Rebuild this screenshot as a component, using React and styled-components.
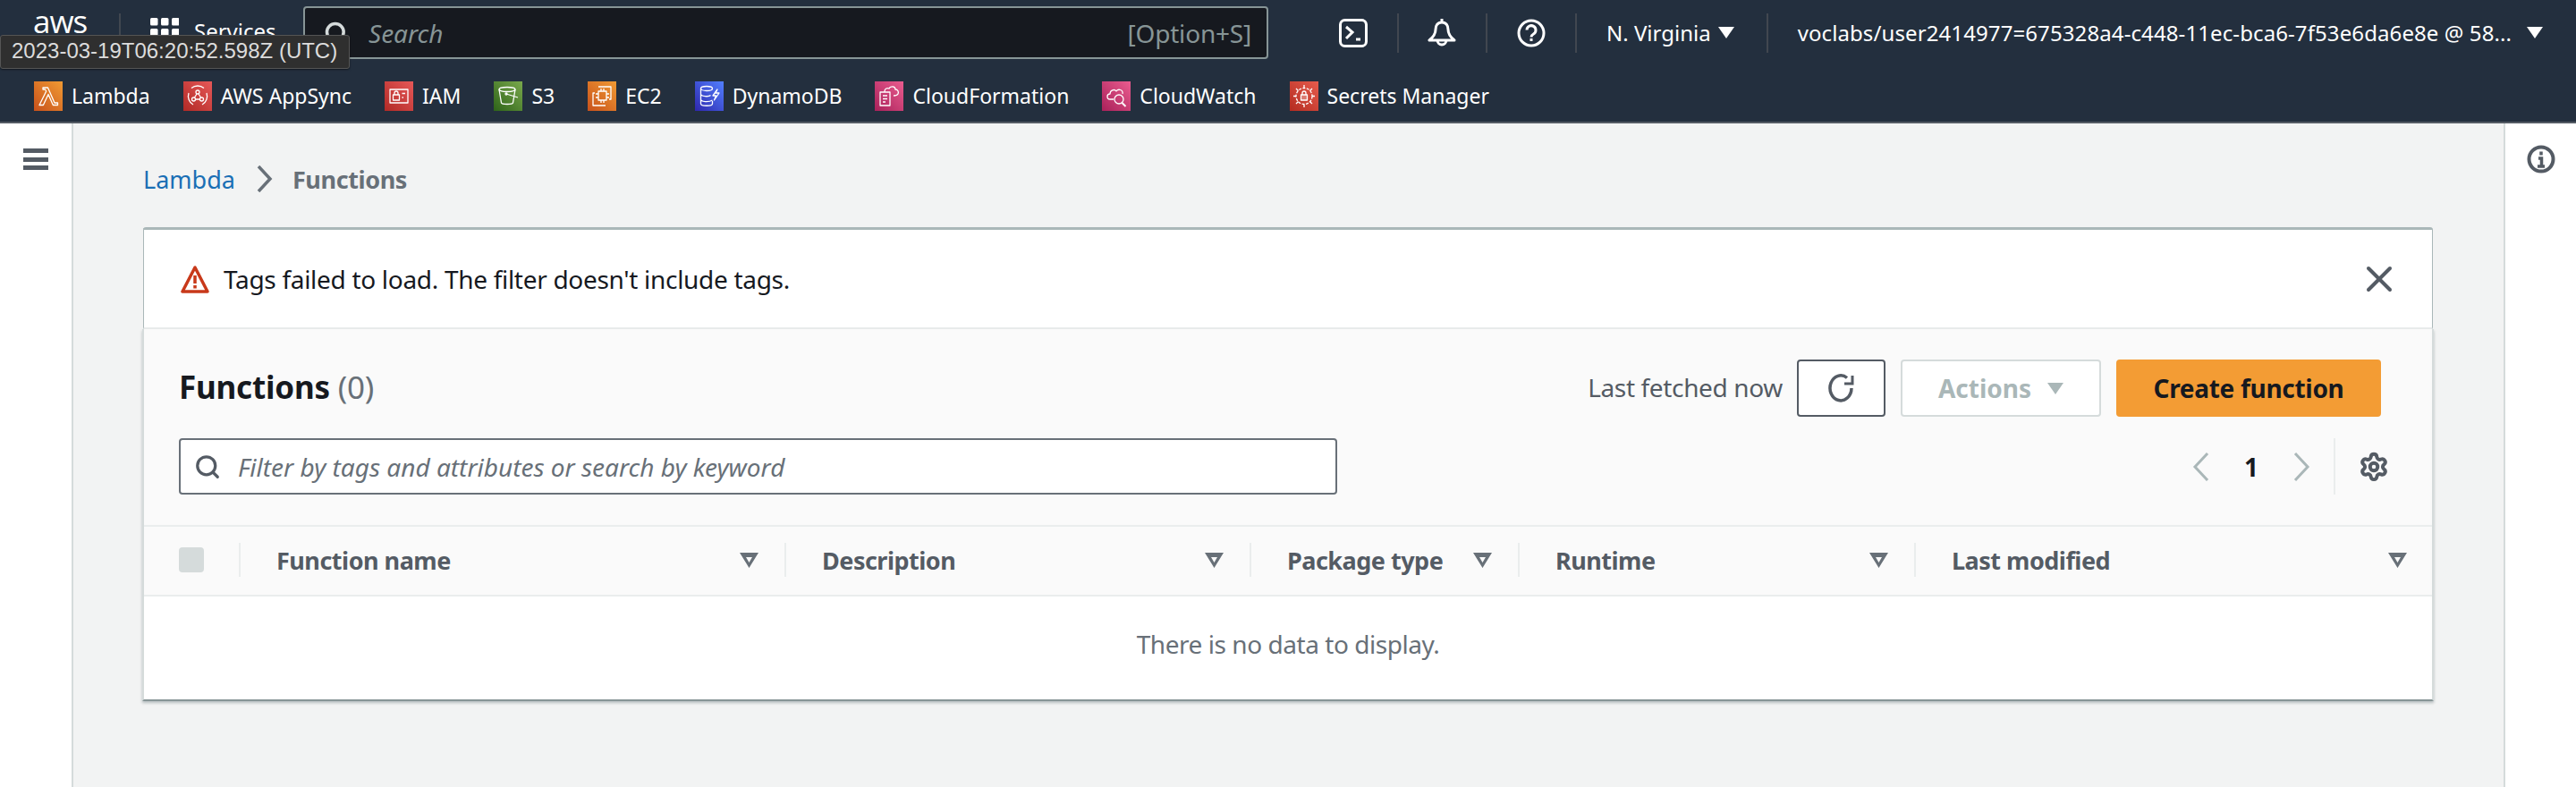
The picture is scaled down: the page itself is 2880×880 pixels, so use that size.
import React from 'react';
import styled, { createGlobalStyle } from 'styled-components';
import { Search, Settings, X } from 'lucide-react';

const GlobalStyle = createGlobalStyle`
  html, body {
    margin: 0;
    padding: 0;
    background: #f2f3f3;
    font-family: "Noto Sans", "Open Sans", sans-serif;
  }
  * { box-sizing: border-box; }
`;

const Page = styled.div`
  width: 2880px;
  height: 880px;
  display: flex;
  flex-direction: column;
  position: relative;
  overflow: hidden;
`;

/* ---------- top nav ---------- */

const Nav = styled.header`
  height: 138px;
  background: #232f3e;
  border-bottom: 2px solid #545b64;
  flex: none;
`;

const NavTop = styled.div`
  height: 66px;
  display: flex;
  align-items: center;
  padding-top: 7px;
  color: #fff;
`;

const LogoCell = styled.div`
  width: 133px;
  height: 100%;
  padding-left: 37px;
  font: 400 35px/34px "Open Sans", sans-serif;
  letter-spacing: -1px;
`;

const NavDivider = styled.span`
  width: 2px;
  height: 44px;
  background: #414750;
  flex: none;
`;

const ServicesCell = styled.div`
  width: 204px;
  height: 100%;
  padding: 13px 0 0 33px;
  display: flex;
  gap: 17px;
  font-size: 24px;
  line-height: 30px;
`;

const SearchBox = styled.div`
  width: 1079px;
  height: 59px;
  margin-right: 46px;
  background: #16191f;
  border: 2px solid #879596;
  border-radius: 4px;
  display: flex;
  align-items: center;
  padding: 0 17px 0 21px;
  color: #879596;
  font-size: 28px;
`;

const SearchLabel = styled.em`
  margin-left: 22px;
  flex: 1;
`;

const SearchKey = styled.span`
  letter-spacing: -0.2px;
`;

const NavCell = styled.div`
  display: flex;
  align-items: center;
  padding: ${(p) => p.$pad};
  font-size: 24px;
  letter-spacing: ${(p) => p.$track || 0}px;
  white-space: nowrap;
`;

const Caret = styled.span`
  width: 0;
  height: 0;
  margin-left: ${(p) => p.$gap || 12}px;
  border-left: 9px solid transparent;
  border-right: 9px solid transparent;
  border-top: 13px solid ${(p) => p.$color || '#fff'};
`;

const Favorites = styled.div`
  height: 70px;
  display: flex;
  align-items: center;
  padding: 12px 0 0 38px;
  gap: 37px;
`;

const Favorite = styled.div`
  display: flex;
  align-items: center;
  gap: 10px;
  color: #fff;
  font-size: 23px;
`;

const Tile = styled.span`
  width: 32px;
  height: 33px;
  flex: none;
  display: flex;
  background: linear-gradient(45deg, ${(p) => p.$from}, ${(p) => p.$to});

  svg {
    width: 32px;
    height: 33px;
    fill: none;
    stroke: #fff;
    stroke-width: 1.3;
    stroke-linejoin: round;
  }
`;

const Tooltip = styled.div`
  position: absolute;
  top: 39px;
  left: 0;
  width: 391px;
  height: 38px;
  background: #2f2f2f;
  border: 1px solid #555;
  border-radius: 3px;
  box-shadow: 0 1px 2px rgba(0, 0, 0, 0.5);
  color: #dcdcdc;
  font: 400 24px/34px "Liberation Sans", Arial, sans-serif;
  padding-left: 12px;
  white-space: nowrap;
`;

/* ---------- body ---------- */

const Body = styled.div`
  flex: 1;
  display: flex;
  min-height: 0;
`;

const SideRail = styled.aside`
  width: 82px;
  flex: none;
  background: #fff;
  border-right: 2px solid #d5dbdb;
  padding: 28px 0 0 26px;
`;

const Burger = styled.div`
  width: 28px;
  height: 24px;
  display: flex;
  flex-direction: column;
  justify-content: space-between;

  span {
    height: 5px;
    background: #545b64;
  }
`;

const RightRail = styled.aside`
  width: 81px;
  flex: none;
  background: #fff;
  border-left: 2px solid #d5dbdb;
  padding: 24px 0 0 24px;
`;

const Main = styled.main`
  flex: 1;
  min-width: 0;
  padding: 42px 79px 0 78px;
`;

const Crumbs = styled.nav`
  height: 40px;
  display: flex;
  align-items: center;
  font-size: 27px;
`;

const CrumbLink = styled.a`
  color: #1a6fb5;
`;

const CrumbCurrent = styled.span`
  color: #687078;
  font-weight: 700;
  letter-spacing: -0.4px;
`;

const CrumbChevron = styled.svg`
  width: 18px;
  height: 30px;
  margin: 0 22px 0 24px;
  fill: none;
  stroke: #687078;
  stroke-width: 3.5;
`;

const Alert = styled.div`
  margin-top: 34px;
  height: 114px;
  background: #fff;
  border: 1px solid #aab7b8;
  border-top: 3px solid #aab7b8;
  border-bottom: 2px solid #eaeded;
  border-radius: 3px 3px 0 0;
  display: flex;
  align-items: center;
  padding: 0 35px 0 41px;
  color: #16191f;
  font-size: 28px;
  letter-spacing: -0.3px;
`;

const AlertText = styled.span`
  flex: 1;
  margin-left: 16px;
`;

const Panel = styled.section`
  margin: 0 -1px;
  background: #fff;
  border-left: 2px solid #d5dbdb;
  border-right: 2px solid #d5dbdb;
  border-bottom: 2px solid #879596;
  box-shadow: 0 2px 3px rgba(0, 27, 36, 0.25);
`;

const PanelHead = styled.div`
  background: #fafafa;
  padding: 34px 48px 34px 39px;
  display: flex;
  flex-direction: column;
  gap: 24px;
`;

const HeadRow = styled.div`
  display: flex;
  align-items: center;
  justify-content: space-between;
`;

const Title = styled.h2`
  margin: 0;
  padding-bottom: 3px;
  font-size: 35px;
  font-weight: 700;
  letter-spacing: -0.2px;
  color: #16191f;

  span {
    font-weight: 400;
    color: #687078;
  }
`;

const Actions = styled.div`
  display: flex;
  align-items: center;
  margin-right: 9px;
`;

const Fetched = styled.span`
  color: #545b64;
  font-size: 28px;
  letter-spacing: -0.35px;
  padding-bottom: 2px;
  margin-right: 16px;
`;

const Button = styled.button`
  height: 64px;
  width: ${(p) => p.$w}px;
  margin-left: ${(p) => p.$ml || 0}px;
  display: flex;
  align-items: center;
  justify-content: center;
  padding: 0;
  background: ${(p) => p.$bg || '#fff'};
  border: ${(p) => p.$border || 'none'};
  border-radius: 4px;
  color: ${(p) => p.$color || '#16191f'};
  font: 700 28px "Noto Sans", sans-serif;
  letter-spacing: ${(p) => p.$track || 0}px;
`;

const FilterBox = styled.div`
  width: 1295px;
  height: 63px;
  background: #fff;
  border: 2px solid #687078;
  border-radius: 4px;
  display: flex;
  align-items: center;
  padding-left: 15px;
  gap: 19px;
  color: #687078;
  font-size: 28px;
  font-style: italic;
`;

const Pager = styled.div`
  display: flex;
  align-items: center;
  height: 63px;
  color: #16191f;
  font-size: 28px;
  font-weight: 700;
`;

const PageChevron = styled.svg`
  width: 20px;
  height: 32px;
  fill: none;
  stroke: #aab7b8;
  stroke-width: 3;
`;

const PageNum = styled.span`
  width: 92px;
  text-align: center;
`;

const PagerGear = styled.div`
  height: 63px;
  margin-left: 26px;
  padding-left: 26px;
  border-left: 2px solid #eaeded;
  display: flex;
  align-items: center;
  color: #545b64;
`;

const TableHead = styled.div`
  display: grid;
  grid-template-columns: 106px 610px 520px 300px 443px 1fr;
  height: 80px;
  padding-bottom: 2px;
  align-items: center;
  background: #fafafa;
  border-top: 2px solid #eaeded;
  border-bottom: 2px solid #eaeded;
`;

const CheckCell = styled.div`
  padding-left: 39px;
  display: flex;
`;

const Check = styled.span`
  width: 28px;
  height: 28px;
  background: #d5dbdb;
  border-radius: 4px;
`;

const HeadCell = styled.div`
  height: 38px;
  border-left: 2px solid #eaeded;
  padding: 0 ${(p) => p.$right || 29}px 0 40px;
  display: flex;
  align-items: center;
  justify-content: space-between;
  color: #545b64;
  font-size: 27px;
  font-weight: 700;
  letter-spacing: -0.5px;
  white-space: nowrap;
`;

const SortIcon = styled.svg`
  width: 21px;
  height: 17px;
  flex: none;
  fill: #687078;
`;

const Empty = styled.div`
  height: 115px;
  padding-bottom: 10px;
  background: #fff;
  display: flex;
  align-items: center;
  justify-content: center;
  color: #687078;
  font-size: 28px;
  letter-spacing: -0.45px;
`;

/* ---------- drawings ---------- */

const LambdaGlyph = () => (
  <svg viewBox="0 0 32 33"><path d="M10 7h5.500l7.500 17h3.500v2.500h-5.200l-5.300-12-5.600 12H6l7.700-15.500L12.500 9H10z" /></svg>
);
const AppSyncGlyph = () => (
  <svg viewBox="0 0 32 33">
    <path d="M23 7.500a11 11 0 0 0-14 0M6 13a11 11 0 0 0 5 13M26 13a11 11 0 0 1-5 13" />
    <circle cx="16" cy="12" r="2" /><circle cx="11.500" cy="20" r="2" /><circle cx="20.500" cy="20" r="2" />
    <path d="M15 14l-2.500 4M17 14l2.500 4M13.500 20h5" />
  </svg>
);
const IamGlyph = () => (
  <svg viewBox="0 0 32 33">
    <rect x="6" y="9" width="20" height="15" />
    <rect x="9.500" y="15" width="7" height="6" />
    <path d="M11 15v-2a2 2 0 0 1 4 0v2M19.500 13.500h3.500M19.500 18h1.500" />
  </svg>
);
const S3Glyph = () => (
  <svg viewBox="0 0 32 33">
    <ellipse cx="15" cy="9" rx="9" ry="2.500" />
    <path d="M6 9l2.500 15c.5 2 12.500 2 13 0L24 9M14 14l13 4" />
    <circle cx="14" cy="14" r="1" />
  </svg>
);
const Ec2Glyph = () => (
  <svg viewBox="0 0 32 33">
    <rect x="12" y="11" width="9" height="10" />
    <path d="M15 8v3M18 8v3M15 21v3M18 21v3M9 14h3M9 18h3M21 14h3M21 18h3M12 6h14v14h-2M20 27H6V13h2" />
  </svg>
);
const DynamoGlyph = () => (
  <svg viewBox="0 0 32 33">
    <ellipse cx="13" cy="8" rx="6.500" ry="2.500" />
    <path d="M6.500 8v17c0 3 13 3 13 0v-3M6.500 14c0 3 9 3.500 11 1.500M6.500 20c0 3 9 3.500 13 1M25 9l-5 7h3.500l-2 5 5.500-8H23z" />
  </svg>
);
const CloudFormationGlyph = () => (
  <svg viewBox="0 0 32 33">
    <path d="M6 12h11v15H6zM9 16h5M9 19.500h5M9 23h3" />
    <path d="M11 12v-1c0-3 3-4 5-3 1-3 7-3 7 1 3 0 4 3 3 5-1 2-3 2-5 2" />
  </svg>
);
const CloudWatchGlyph = () => (
  <svg viewBox="0 0 32 33">
    <path d="M13 20H9c-4 0-4-6 0-6 0-4 5-6 7-3 2-3 8-2 7 3" />
    <circle cx="19" cy="20" r="5" />
    <path d="M22.500 24l4 4" strokeWidth="2" />
  </svg>
);
const SecretsGlyph = () => (
  <svg viewBox="0 0 32 33">
    <circle cx="16" cy="16.500" r="9" strokeDasharray="3 1.500" />
    <path d="M16 4v3M16 26v3M4 16.500h3M25 16.500h3M7 8l2.500 2.500M25 8l-2.500 2.500M7 25l2.500-2.500M25 25l-2.500-2.500" />
    <rect x="12.500" y="15" width="7" height="6" fill="#fff" fillOpacity="0.3" />
    <path d="M14 15v-2a2 2 0 0 1 4 0v2" />
  </svg>
);

const ShellIcon = () => (
  <svg width="32" height="32" viewBox="0 0 32 32" fill="none" stroke="#fff" strokeWidth="3">
    <rect x="1.500" y="1.500" width="29" height="29" rx="5" />
    <path d="M8 9l7 6-7 7M19 23h5" />
  </svg>
);
const BellIcon = () => (
  <svg width="32" height="34" viewBox="0 0 32 34" fill="none" stroke="#fff" strokeWidth="3" strokeLinejoin="round">
    <path d="M16 1v4M16 5c-5 0-7 4-7 8 0 5-2 8-7 12h28c-5-4-7-7-7-12 0-4-2-8-7-8zM11 25a5 5 0 0 0 10 0" />
  </svg>
);
const HelpIcon = () => (
  <svg width="32" height="32" viewBox="0 0 32 32" fill="none" stroke="#fff" strokeWidth="3">
    <circle cx="16" cy="16" r="14" />
    <path d="M11 12.500a5 5 0 1 1 7.500 4.500c-1.700 1-2.500 2-2.500 3.500M16 22v3" />
  </svg>
);
const InfoIcon = () => (
  <svg width="32" height="32" viewBox="0 0 32 32" fill="none" stroke="#545b64" strokeWidth="4">
    <circle cx="16" cy="16" r="13.500" />
    <path d="M16 7.500v4M13 15h3.500v9M12 24h8" strokeWidth="3.500" />
  </svg>
);
const AlertIcon = () => (
  <svg width="32" height="32" viewBox="0 0 32 32" fill="none" stroke="#c8391a" strokeWidth="3.500" style={{ flex: 'none' }}>
    <path d="M16 3L2 30h28z" strokeLinejoin="round" />
    <path d="M16 12v9M16 23v3.500" />
  </svg>
);
const RefreshIcon = () => (
  <svg width="32" height="32" viewBox="0 0 32 32" fill="none" stroke="#545b64" strokeWidth="3.500">
    <path d="M27 16a12 14 0 1 1-5-11.500" />
    <path d="M28 2v9h-9" strokeWidth="3" />
  </svg>
);
const SortGlyph = () => (
  <SortIcon viewBox="0 0 21 17">
    <path fillRule="evenodd" d="M0 0h21l-10.500 17zM7 5l3.500 6 3.500-6z" />
  </SortIcon>
);
const GridIcon = () => (
  <svg width="32" height="32" viewBox="0 0 32 32" fill="#fff" style={{ flex: 'none' }}>
    {[0, 12, 24].map((y) =>
      [0, 12, 24].map((x) => <rect key={`${x}-${y}`} x={x} y={y} width="8.500" height="8.500" rx="1.500" />)
    )}
  </svg>
);

const LAMBDA = ['#c8511b', '#f09a33'];
const RED = ['#b12a26', '#e65858'];
const GREEN = ['#2e6319', '#7aa94c'];
const BLUE = ['#2e27ad', '#527fff'];
const PINK = ['#a9215a', '#ea5c8f'];
const EMBER = ['#b42b20', '#e65c4d'];

const favorites = [
  { name: 'Lambda', colors: LAMBDA, Glyph: LambdaGlyph },
  { name: 'AWS AppSync', colors: RED, Glyph: AppSyncGlyph },
  { name: 'IAM', colors: RED, Glyph: IamGlyph },
  { name: 'S3', colors: GREEN, Glyph: S3Glyph },
  { name: 'EC2', colors: LAMBDA, Glyph: Ec2Glyph },
  { name: 'DynamoDB', colors: BLUE, Glyph: DynamoGlyph },
  { name: 'CloudFormation', colors: PINK, Glyph: CloudFormationGlyph },
  { name: 'CloudWatch', colors: PINK, Glyph: CloudWatchGlyph },
  { name: 'Secrets Manager', colors: EMBER, Glyph: SecretsGlyph },
];

const columns = [
  { title: 'Function name' },
  { title: 'Description' },
  { title: 'Package type' },
  { title: 'Runtime' },
  { title: 'Last modified', right: 28 },
];

const App = () => {
  return (
    <Page>
      <GlobalStyle />
      <Nav>
        <NavTop>
          <LogoCell>aws</LogoCell>
          <NavDivider />
          <ServicesCell>
            <GridIcon />
            <span>Services</span>
          </ServicesCell>
          <SearchBox>
            <Search size={28} strokeWidth={3} color="#d5dbdb" />
            <SearchLabel>Search</SearchLabel>
            <SearchKey>[Option+S]</SearchKey>
          </SearchBox>
          <NavCell $pad="0 33px">
            <ShellIcon />
          </NavCell>
          <NavDivider />
          <NavCell $pad="0 33px 0 32px">
            <BellIcon />
          </NavCell>
          <NavDivider />
          <NavCell $pad="0 33px">
            <HelpIcon />
          </NavCell>
          <NavDivider />
          <NavCell $pad="0 36px 0 33px">
            N. Virginia
            <Caret $gap={8} />
          </NavCell>
          <NavDivider />
          <NavCell $pad="0 0 0 33px" $track={0.1}>
            voclabs/user2414977=675328a4-c448-11ec-bca6-7f53e6da6e8e @ 58...
            <Caret $gap={17} />
          </NavCell>
        </NavTop>
        <Favorites>
          {favorites.map(({ name, colors, Glyph }) => (
            <Favorite key={name}>
              <Tile $from={colors[0]} $to={colors[1]}>
                <Glyph />
              </Tile>
              {name}
            </Favorite>
          ))}
        </Favorites>
      </Nav>

      <Body>
        <SideRail>
          <Burger>
            <span />
            <span />
            <span />
          </Burger>
        </SideRail>

        <Main>
          <Crumbs>
            <CrumbLink>Lambda</CrumbLink>
            <CrumbChevron viewBox="0 0 18 30">
              <path d="M2 1l13 14L2 29" />
            </CrumbChevron>
            <CrumbCurrent>Functions</CrumbCurrent>
          </Crumbs>

          <Alert>
            <AlertIcon />
            <AlertText>Tags failed to load. The filter doesn't include tags.</AlertText>
            <X size={48} color="#545b64" strokeWidth={2} />
          </Alert>

          <Panel>
            <PanelHead>
              <HeadRow>
                <Title>
                  Functions <span>(0)</span>
                </Title>
                <Actions>
                  <Fetched>Last fetched now</Fetched>
                  <Button $w={99} $border="2px solid #545b64">
                    <RefreshIcon />
                  </Button>
                  <Button $w={224} $ml={17} $border="2px solid #d5dbdb" $color="#aab7b8">
                    Actions
                    <Caret $gap={18} $color="#aab7b8" />
                  </Button>
                  <Button $w={296} $ml={17} $bg="#f39c34" $track={-0.3}>
                    Create function
                  </Button>
                </Actions>
              </HeadRow>
              <HeadRow>
                <FilterBox>
                  <Search size={30} strokeWidth={2.6} color="#545b64" />
                  Filter by tags and attributes or search by keyword
                </FilterBox>
                <Pager>
                  <PageChevron viewBox="0 0 20 32">
                    <path d="M17 1L3 16l14 15" />
                  </PageChevron>
                  <PageNum>1</PageNum>
                  <PageChevron viewBox="0 0 20 32">
                    <path d="M3 1l14 15L3 31" />
                  </PageChevron>
                  <PagerGear>
                    <Settings size={34} strokeWidth={2.8} />
                  </PagerGear>
                </Pager>
              </HeadRow>
            </PanelHead>

            <TableHead>
              <CheckCell>
                <Check />
              </CheckCell>
              {columns.map((col) => (
                <HeadCell key={col.title} $right={col.right}>
                  {col.title}
                  <SortGlyph />
                </HeadCell>
              ))}
            </TableHead>
            <Empty>There is no data to display.</Empty>
          </Panel>
        </Main>

        <RightRail>
          <InfoIcon />
        </RightRail>
      </Body>

      <Tooltip>2023-03-19T06:20:52.598Z (UTC)</Tooltip>
    </Page>
  );
};

export default App;
